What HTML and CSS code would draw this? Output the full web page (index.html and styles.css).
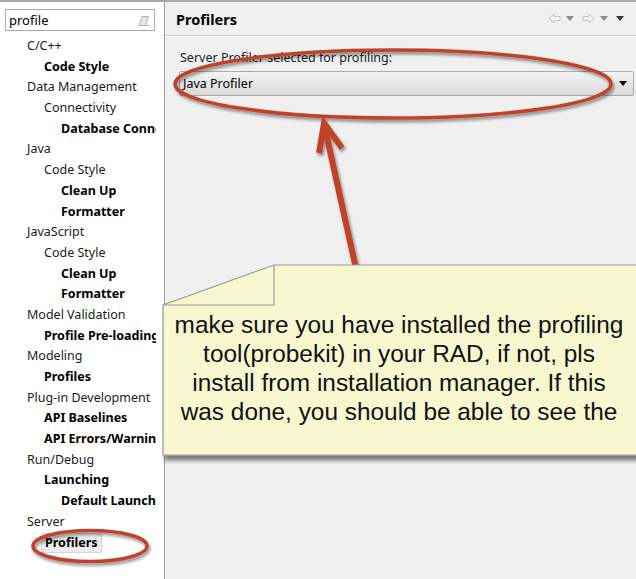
FILE: index.html
```html
<!DOCTYPE html>
<html>
<head>
<meta charset="utf-8">
<link rel="stylesheet" href="styles.css">
</head>
<body>
<div class="app">
  <div class="topline"></div>
  <div class="main">
    <aside class="sidebar">
      <div class="search">
        <span class="search-text">profile</span>
        <svg class="eraser" width="12" height="12" viewBox="0 0 12 12"><path d="M4 1.5h6.5l-3 9H1z" fill="#e4e4e4" stroke="#b4b4b4" stroke-width="1"/><path d="M1 10.5h10" stroke="#b4b4b4"/></svg>
      </div>
      <ul class="tree">
        <li class="l0">C/C++</li>
        <li class="l1 b">Code Style</li>
        <li class="l0">Data Management</li>
        <li class="l1">Connectivity</li>
        <li class="l2 b">Database Connections</li>
        <li class="l0">Java</li>
        <li class="l1">Code Style</li>
        <li class="l2 b">Clean Up</li>
        <li class="l2 b">Formatter</li>
        <li class="l0">JavaScript</li>
        <li class="l1">Code Style</li>
        <li class="l2 b">Clean Up</li>
        <li class="l2 b">Formatter</li>
        <li class="l0">Model Validation</li>
        <li class="l1 b">Profile Pre-loading</li>
        <li class="l0">Modeling</li>
        <li class="l1 b">Profiles</li>
        <li class="l0">Plug-in Development</li>
        <li class="l1 b">API Baselines</li>
        <li class="l1 b">API Errors/Warnings</li>
        <li class="l0">Run/Debug</li>
        <li class="l1 b">Launching</li>
        <li class="l2 b">Default Launchers</li>
        <li class="l0">Server</li>
        <li class="l1 b"><span class="selected">Profilers</span></li>
      </ul>
    </aside>
    <section class="content">
      <header class="header">
        <h1 class="title">Profilers</h1>
        <div class="nav">
          <svg width="13" height="11" viewBox="0 0 13 11"><path d="M1 5.5l5-4.5v2.5h6v4h-6V10z" fill="#f4f4f4" stroke="#c4c4c4"/></svg>
          <svg class="tri" width="8" height="5" viewBox="0 0 8 5"><path d="M0 0h8L4 5z" fill="#8a8a8a"/></svg>
          <svg width="13" height="11" viewBox="0 0 13 11"><path d="M12 5.5L7 1v2.5H1v4h6V10z" fill="#f4f4f4" stroke="#c4c4c4"/></svg>
          <svg class="tri" width="8" height="5" viewBox="0 0 8 5"><path d="M0 0h8L4 5z" fill="#8a8a8a"/></svg>
          <svg class="tri" width="8" height="5" viewBox="0 0 8 5"><path d="M0 0h8L4 5z" fill="#2c2c5c"/></svg>
        </div>
      </header>
      <div class="body">
        <div class="label">Server Profiler selected for profiling:</div>
        <div class="combo">
          <span>Java Profiler</span>
          <svg width="8" height="5" viewBox="0 0 8 5"><path d="M0 0h8L4 5z" fill="#000"/></svg>
        </div>
      </div>
    </section>
  </div>

  <svg class="annot" width="636" height="579" viewBox="0 0 636 579">
    <defs>
      <filter id="sh" x="-20%" y="-40%" width="140%" height="180%">
        <feDropShadow dx="1.5" dy="2.5" stdDeviation="1.5" flood-color="#000" flood-opacity="0.45"/>
      </filter>
    </defs>
    <g filter="url(#sh)" fill="none" stroke="#c0432b" stroke-width="3.5" stroke-linecap="round">
      <ellipse cx="393" cy="84" rx="218" ry="34"/>
      <ellipse cx="90" cy="546" rx="57" ry="15.5"/>
      <path d="M319 153L324 123L342 148" stroke-linejoin="miter" stroke-linecap="butt" stroke-width="6"/>
      <path d="M355 264L324 124" stroke-width="6"/>
    </g>
  </svg>

  <div class="callout">
    <svg class="callout-shape" width="480" height="200" viewBox="0 0 480 200">
      <defs>
        <filter id="csh" x="-5%" y="-10%" width="115%" height="130%">
          <feDropShadow dx="2" dy="5" stdDeviation="2" flood-color="#000" flood-opacity="0.5"/>
        </filter>
      </defs>
      <path d="M1 41L112 1H479V191H1Z" fill="#f8f7d0" stroke="#9a9a9a" stroke-width="1.2" filter="url(#csh)"/>
      <path d="M112 1V41H1" fill="none" stroke="#9a9a9a" stroke-width="1.2"/>
    </svg>
    <p class="callout-text">make sure you have installed the profiling<br>tool(probekit) in your RAD, if not, pls<br>install from installation manager. If this<br>was done, you should be able to see the</p>
  </div>
</div>
</body>
</html>
```

FILE: styles.css
```css
* { box-sizing: border-box; }
html, body { margin: 0; padding: 0; }
body {
  width: 636px;
  height: 579px;
  overflow: hidden;
  background: #f0f0f0;
  font-family: "Noto Sans", "Open Sans", sans-serif;
  color: #1a1a1a;
}
.app {
  position: relative;
  width: 636px;
  height: 579px;
  display: flex;
  flex-direction: column;
}
.topline {
  height: 2px;
  background: #a8a8a8;
  flex: none;
}
.main {
  flex: 1;
  display: flex;
  min-height: 0;
}
.sidebar {
  width: 165px;
  flex: none;
  background: #fff;
  border-right: 1px solid #a0a0a0;
  padding: 7px 0 0 5px;
}
.search {
  width: 150px;
  height: 22px;
  border: 1px solid #a9a9a9;
  display: flex;
  align-items: center;
  justify-content: space-between;
  padding: 0 4px 0 3px;
}
.search-text {
  font-size: 13px;
  color: #000;
}
.eraser { margin-top: 1px; }
.tree {
  list-style: none;
  margin: 5px 0 0 0;
  padding: 0;
  width: 151px;
  overflow: hidden;
}
.tree li {
  height: 20.7px;
  line-height: 20.7px;
  font-size: 12.5px;
  white-space: nowrap;
  color: #1a1a1a;
}
.tree .l0 { padding-left: 22px; }
.tree .l1 { padding-left: 39px; }
.tree .l2 { padding-left: 56px; }
.tree .b { font-weight: 700; color: #000; }
.selected {
  display: inline-block;
  line-height: 18px;
  margin-left: -3px;
  padding: 0 3px;
  background: #ececec;
  border: 1px solid #d8d8d8;
  border-radius: 2px;
}
.content {
  flex: 1;
  display: flex;
  flex-direction: column;
  background: #f0f0f0;
}
.header {
  height: 34px;
  display: flex;
  align-items: center;
  justify-content: space-between;
  padding: 0 12px 0 11px;
  border-bottom: 1px solid #c8c8c8;
  box-shadow: 0 1px 0 #fff;
}
.title {
  margin: 0;
  font-size: 14.5px;
  font-weight: 700;
  color: #000;
}
.nav {
  display: flex;
  align-items: center;
  gap: 5px;
}
.nav .tri { margin-right: 3px; }
.nav .tri:last-child { margin-right: 0; }
.body {
  padding: 12px 2px 0 15px;
}
.label {
  font-size: 12.5px;
  color: #222;
  line-height: 20px;
}
.combo {
  margin-top: 3px;
  margin-left: -1px;
  height: 25px;
  border: 1px solid #acacac;
  border-radius: 2px;
  background: linear-gradient(#f4f4f4, #e6e6e6 50%, #d9d9d9);
  display: flex;
  align-items: center;
  justify-content: space-between;
  padding: 0 6px 0 3px;
  font-size: 12.5px;
  color: #000;
}
.annot {
  position: absolute;
  left: 0;
  top: 0;
  pointer-events: none;
  z-index: 2;
}
.callout {
  position: absolute;
  left: 162px;
  top: 264px;
  width: 480px;
  height: 200px;
  z-index: 3;
}
.callout-shape {
  position: absolute;
  left: 0;
  top: 0;
}
.callout-text {
  position: relative;
  margin: 0;
  padding-top: 46px;
  width: 474px;
  text-align: center;
  font-family: Arial, "Liberation Sans", sans-serif;
  font-size: 24.4px;
  line-height: 29px;
  color: #111;
}
```
